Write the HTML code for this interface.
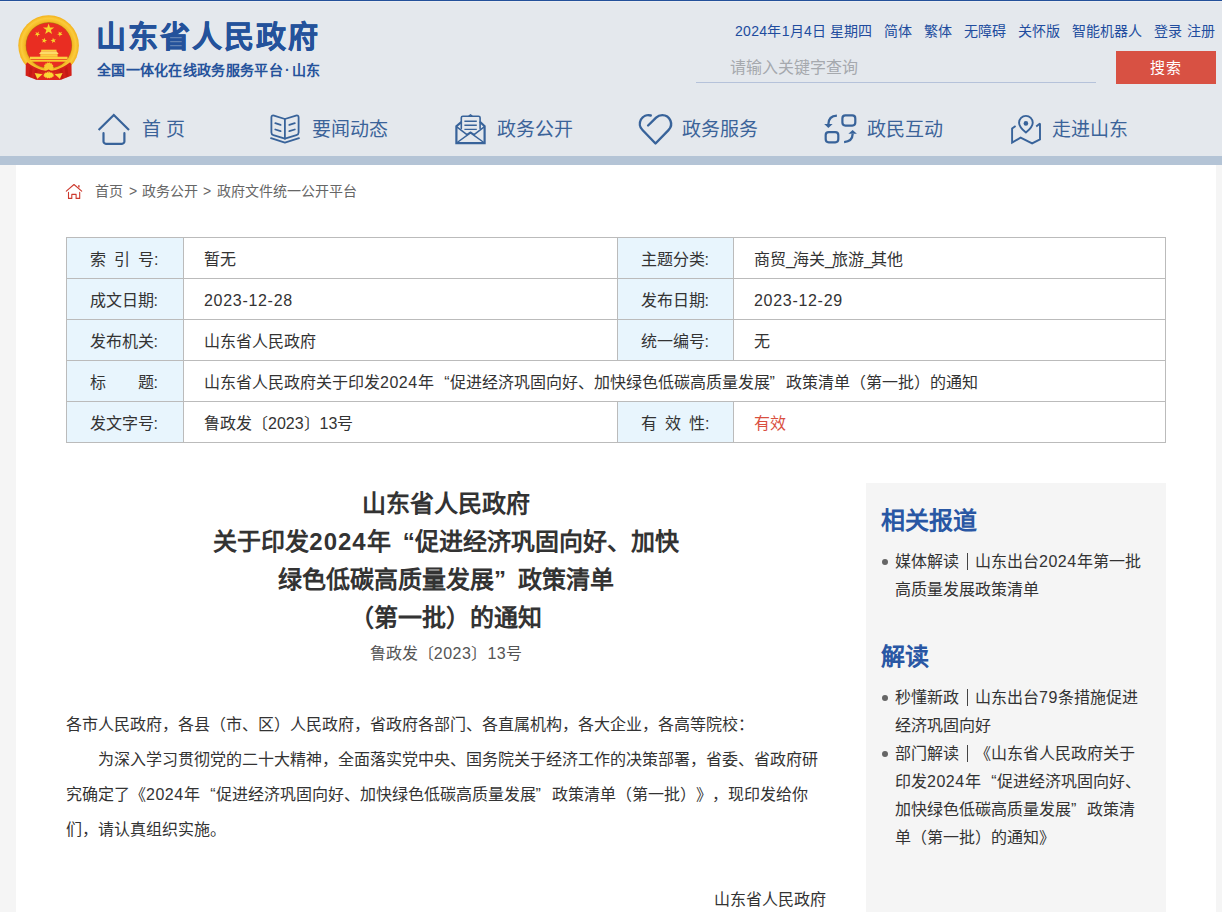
<!DOCTYPE html>
<html lang="zh-CN">
<head>
<meta charset="utf-8">
<title>山东省人民政府</title>
<style>
*{box-sizing:border-box;margin:0;padding:0}
html,body{width:1222px;height:912px;overflow:hidden}
body{text-spacing-trim:space-all;font-family:"Liberation Sans",sans-serif;background:#f5f5f5;color:#333;position:relative;font-size:16px}
a{color:inherit;text-decoration:none}
.abs{position:absolute;white-space:nowrap}
/* header */
#hd{position:absolute;left:0;top:0;width:1222px;height:156px;background:#e4e8ed}
#topline{position:absolute;left:0;top:0;width:1222px;height:1px;background:#23509a}
#topline2{position:absolute;left:0;top:1px;width:1222px;height:1px;background:#eceef2}
#band{position:absolute;left:0;top:156px;width:1222px;height:9px;background:#b4c4d6}
#logo-t{left:96px;top:15px;font-size:30px;line-height:44px;font-weight:bold;color:#24529b;letter-spacing:2px;-webkit-text-stroke:.5px #24529b}
#logo-s{left:97px;top:60px;font-size:14px;line-height:20px;font-weight:bold;color:#24529b;letter-spacing:.3px}
.tl{top:20.5px;font-size:14px;line-height:20px;color:#214c9e}
#sline{position:absolute;left:696px;top:82px;width:400px;height:1px;background:#b5c2da}
#sph{left:730px;top:57px;font-size:16px;line-height:22px;color:#a6a9ae}
#sbtn{position:absolute;left:1116px;top:51px;width:100px;height:33px;background:#d85143;color:#fff;font-size:15px;line-height:33px;text-align:center;letter-spacing:1px}
.nv{top:116px;font-size:19px;line-height:28px;color:#3b6399}
.ic{position:absolute;overflow:visible}
/* main */
#main{position:absolute;left:16px;top:165px;width:1200px;height:747px;background:#fff}
.bc{top:181px;font-size:14px;line-height:20px;color:#666}
/* table */
#tb{position:absolute;left:66px;top:237px;width:1099px;height:206px;border-collapse:collapse;table-layout:fixed;font-size:16px;color:#333}
#tb td{border:1px solid #bbb;height:41px;line-height:22px;padding:4px 0 0 20px;white-space:nowrap;vertical-align:middle}
#tb td.l{background:#e8f5fd;padding-left:22.5px;word-spacing:3.8px}
#tb .d{letter-spacing:.7px}
#tb .u{margin-right:-1.9px}
/* article */
#ttl{position:absolute;left:66px;top:484.5px;width:760px;text-align:center;font-size:24px;line-height:38.2px;font-weight:bold;color:#333;white-space:nowrap}
#sub{position:absolute;left:66px;top:642px;width:760px;text-align:center;font-size:16px;line-height:24px;color:#555;white-space:nowrap}
.p{left:66px;font-size:16px;line-height:24px;color:#333}
/* sidebar */
#sd{position:absolute;left:866px;top:483px;width:300px;height:429px;background:#f5f5f5}
.sh{left:881px;font-size:24px;line-height:34px;font-weight:bold;color:#2957a4}
.li{left:895px;font-size:16px;line-height:28px;color:#333}
.q1,.q2{display:inline-block;width:1em}.q1{text-align:right}.q2{text-align:left}
.n{letter-spacing:.5px}#ttl .n{letter-spacing:1px}
.dot{position:absolute;left:881.7px;width:6px;height:6px;border-radius:50%;background:#666}
.bar{display:inline-block;width:16px;color:transparent;background:linear-gradient(#444,#444) no-repeat 7.8px 5.3px/1.4px 17px}
</style>
</head>
<body>
<div id="hd"></div>
<div id="topline"></div><div id="topline2"></div>
<div id="band"></div>


<svg class="ic" style="left:0;top:0" width="100" height="100" viewBox="0 0 100 100">
<defs>
<radialGradient id="rg" cx="48.6" cy="45.6" r="30.3" gradientUnits="userSpaceOnUse">
<stop offset="0.74" stop-color="#e8a21a"/><stop offset="0.8" stop-color="#f6bb26"/><stop offset="0.9" stop-color="#fbcb3c"/><stop offset="1" stop-color="#f3b21c"/>
</radialGradient>
<clipPath id="cp"><rect x="0" y="0" width="100" height="66.5"/></clipPath>
</defs>
<!-- ring -->
<circle cx="48.6" cy="45.6" r="30.3" fill="url(#rg)"/>
<circle cx="48.9" cy="45.4" r="23.1" fill="#7a4a10" opacity=".55"/>
<circle cx="48.9" cy="45.4" r="22.7" fill="#e92d22"/>
<!-- drapes over ring -->
<path d="M36.8 79.9 L42.6 70.3 Q48.6 72 54.6 70.3 L60.4 79.9 Z" fill="#e0281e"/>
<path d="M27.1 62.3 Q33.5 67.4 42.8 70.6 L36.8 79.9 L25.4 75.4 L25.5 65 Z" fill="#d3211a"/>
<path d="M70.1 62.3 Q63.7 67.4 54.4 70.6 L60.4 79.9 L71.8 75.4 L71.7 65 Z" fill="#d3211a"/>
<path d="M18 62 L25.5 65 L25.4 75.4 L18 76 Z M79 62 L71.7 65 L71.8 75.4 L79 76Z" fill="#e4e8ed"/>
<path d="M30 66.5 L28.6 76.6 L31.2 77.6 L32.6 68.2 Z M35 69.3 L33.8 78.6 L36.2 79.4 L37.6 70.4Z" fill="#b8140f" opacity=".5"/>
<path d="M67.2 66.5 L68.6 76.6 L66 77.6 L64.6 68.2 Z M62.2 69.3 L63.4 78.6 L61 79.4 L59.6 70.4Z" fill="#b8140f" opacity=".5"/>
<g fill="#f9c92e">
<polygon points="53.90,67.20 52.76,68.13 53.39,69.46 51.95,69.79 51.94,71.27 50.50,70.95 49.86,72.27 48.70,71.36 47.54,72.27 46.90,70.95 45.46,71.27 45.45,69.79 44.01,69.46 44.64,68.13 43.50,67.20 44.64,66.27 44.01,64.94 45.45,64.61 45.46,63.13 46.90,63.45 47.54,62.13 48.70,63.04 49.86,62.13 50.50,63.45 51.94,63.13 51.95,64.61 53.39,64.94 52.76,66.27"/>
</g>
<path d="M41.5 70.3 C44.5 71 46.6 70.6 48.6 69.4 C50.6 70.6 52.7 71 55.7 70.3 L55.5 72.2 C52.8 72.8 50.5 72.4 48.6 71.2 C46.7 72.4 44.4 72.8 41.7 72.2Z" fill="#d3211a"/>
<!-- bottom bows -->
<g fill="#fbd734">
<path d="M34.6 73 L42.6 74.2 L37.3 78.8 Z"/><path d="M62.6 73 L54.6 74.2 L59.9 78.8 Z"/>
<polygon points="54.30,75.20 53.07,75.79 53.75,76.63 52.20,76.85 52.19,77.78 50.64,77.58 49.95,78.42 48.70,77.84 47.45,78.42 46.76,77.58 45.21,77.78 45.20,76.85 43.65,76.63 44.33,75.79 43.10,75.20 44.33,74.61 43.65,73.77 45.20,73.55 45.21,72.62 46.76,72.82 47.45,71.98 48.70,72.56 49.95,71.98 50.64,72.82 52.19,72.62 52.20,73.55 53.75,73.77 53.07,74.61"/>
</g>
<!-- tiananmen -->
<g fill="#fbd040">
<rect x="41.2" y="49.7" width="15.3" height="2"/>
<path d="M39 54.1 L41 51.6 H56.7 L58.7 54.1 Z" fill="#fcdc6a"/>
<rect x="40.3" y="54.1" width="17.3" height="2.7"/>
<rect x="29.9" y="56.7" width="37.6" height="2.3"/>
<rect x="29.9" y="59.7" width="37.6" height="2" fill="#f9c92e"/>
</g>
<!-- stars -->
<g fill="#f7d32c">
<polygon points="48.60,23.40 49.99,27.39 54.21,27.48 50.84,30.03 52.07,34.07 48.60,31.66 45.13,34.07 46.36,30.03 42.99,27.48 47.21,27.39"/>
<polygon points="38.85,31.59 38.46,33.63 40.24,34.70 38.18,34.96 37.70,36.98 36.82,35.10 34.75,35.28 36.27,33.86 35.46,31.94 37.28,32.95"/>
<polygon points="58.55,31.39 60.12,32.75 61.94,31.74 61.13,33.66 62.65,35.08 60.58,34.90 59.70,36.78 59.22,34.76 57.16,34.50 58.94,33.43"/>
<polygon points="44.70,37.74 45.03,39.79 47.07,40.20 45.22,41.14 45.47,43.21 44.00,41.74 42.11,42.61 43.05,40.76 41.64,39.24 43.69,39.56"/>
<polygon points="52.90,37.74 53.91,39.56 55.96,39.24 54.55,40.76 55.49,42.61 53.60,41.74 52.13,43.21 52.38,41.14 50.53,40.20 52.57,39.79"/>
</g>
</svg>


<div class="abs" id="logo-t">山东省人民政府</div>
<div class="abs" id="logo-s">全国一体化在线政务服务平台<span style="margin:0 2px">·</span>山东</div>

<div class="abs tl" style="left:735px;letter-spacing:.3px">2024年1月4日</div><div class="abs tl" style="left:830px">星期四</div>
<div class="abs tl" style="left:884px">简体</div>
<div class="abs tl" style="left:924px">繁体</div>
<div class="abs tl" style="left:964px">无障碍</div>
<div class="abs tl" style="left:1018px">关怀版</div>
<div class="abs tl" style="left:1072px">智能机器人</div>
<div class="abs tl" style="left:1154px">登录</div>
<div class="abs tl" style="left:1187px">注册</div>

<div id="sline"></div>
<div class="abs" id="sph">请输入关键字查询</div>
<div id="sbtn">搜索</div>

<!-- NAV -->
<div class="abs nv" style="left:142px">首 页</div>
<div class="abs nv" style="left:312px">要闻动态</div>
<div class="abs nv" style="left:497px">政务公开</div>
<div class="abs nv" style="left:682px">政务服务</div>
<div class="abs nv" style="left:867px">政民互动</div>
<div class="abs nv" style="left:1052px">走进山东</div>

<svg class="ic" style="left:0;top:0" width="1222" height="210" viewBox="0 0 1222 210" fill="none" stroke="#38639a" stroke-linecap="round" stroke-linejoin="round">
<!-- home -->
<path d="M98.6 130 L113.8 115 L129 130" stroke-width="2.2" stroke-linecap="butt" stroke-linejoin="miter"/>
<path d="M103.5 133.2 V141.4 a2.4 2.4 0 0 0 2.4 2.4 H122 a2.4 2.4 0 0 0 2.4 -2.4 V133.2" stroke-width="2.2"/>
<!-- book -->
<g stroke-width="1.8">
<path d="M284.9 119 L274 115.6 Q271.4 114.9 271.4 117.5 V132.5 Q271.4 134.5 273.4 135.2 L284.9 138.7 L296.4 135.2 Q298.6 134.5 298.6 132.5 V117.5 Q298.6 114.9 296 115.6 Z"/>
<path d="M284.9 119 V138.7"/>
<path d="M271 138.2 L284.9 142.6 L299 138.2"/>
<path d="M275.3 123.2 L280.6 124.9 M275.3 129.5 L280.6 131.2 M289.3 124.9 L294.8 123.2 M289.3 131.2 L294.8 129.5"/>
</g>
<!-- envelope -->
<path d="M461 122.3 L456.4 126.2 V143.2 H484.6 V126.2 L480.4 122.3" stroke-width="2.2" stroke-linejoin="miter"/>
<path d="M461.3 128.5 V117.8 Q461.3 116.2 462.9 116.2 H478.5 Q480.1 116.2 480.1 117.8 V128.5" stroke-width="1.6"/>
<path d="M469 116 L470.5 114.8 L472 116" stroke-width="1.4"/>
<path d="M464.4 121.3 H476.8 M464.4 125.2 H476.8 M464.4 129.4 H476.8" stroke-width="1.4" stroke-linecap="butt"/>
<path d="M456.8 126.9 L466.9 134.6 L470.5 132.2 L474.1 134.6 L484.2 126.9" stroke-width="1.5"/>
<path d="M457.8 142 L470.5 132.8 L483.2 142" stroke-width="1.5"/>
<!-- heart -->
<path d="M650.8 115.5 A8.6 8.6 0 0 0 642.5 130 L655.5 143.5 L668.5 130.1 A8.8 8.8 0 0 0 662.3 115.1 A8.8 8.8 0 0 0 656.1 117.7 L648.1 125.5" stroke-width="2.4"/>
<!-- swap -->
<rect x="842.4" y="115.4" width="12.9" height="10.2" rx="3" stroke-width="2.2"/>
<rect x="825.7" y="132.1" width="12.6" height="10.2" rx="3" stroke-width="2.2"/>
<path d="M836.9 115.6 Q828.6 116 828.4 124" stroke-width="2.3" stroke-linecap="butt"/>
<path d="M824.2 123.9 H832.6 L828.4 128 Z" fill="#38639a" stroke="none"/>
<path d="M844.1 142.1 Q852.4 141.6 852.7 133.8" stroke-width="2.3" stroke-linecap="butt"/>
<path d="M848.4 133.8 H856.9 L852.6 129.9 Z" fill="#38639a" stroke="none"/>
<!-- map pin -->
<path d="M1015.6 126.1 L1012.1 128.6 V142.6 L1020.6 137.6 L1032.1 143.4 L1040 139.3 V123.6 L1036.2 126.4" stroke-width="1.9" stroke-linejoin="miter" stroke-miterlimit="2.1" stroke-linecap="butt"/>
<path d="M1025.9 132.6 C1021 128.5 1019.05 126 1019.05 122.7 A6.85 6.85 0 1 1 1032.75 122.7 C1032.75 126 1030.8 128.5 1025.9 132.6 Z" stroke-width="1.9"/>
<circle cx="1025.9" cy="123.4" r="2.3" fill="#38639a" stroke="none"/>
</svg>


<div id="main"></div>


<svg class="ic" style="left:0;top:170px" width="120" height="40" viewBox="0 170 120 40" fill="none" stroke="#cc3a2e" stroke-width="1.1" stroke-linecap="round" stroke-linejoin="round">
<path d="M66.3 191.2 L74 184.5 L81.7 191.2"/>
<path d="M78.9 185.7 V186.9" stroke-width="1.4"/>
<path d="M68.5 192.4 V198.4 H71.8 V194.4 H76.1 V198.4 H79.7 V192.4"/>
</svg>

<div class="abs bc" style="left:95px">首页</div><div class="abs bc" style="left:129px">&gt;</div><div class="abs bc" style="left:142px">政务公开</div><div class="abs bc" style="left:203px">&gt;</div><div class="abs bc" style="left:217px">政府文件统一公开平台</div>

<table id="tb">
<colgroup><col style="width:117px"><col style="width:434px"><col style="width:116px"><col style="width:432px"></colgroup>
<tr><td class="l">索 引 号:</td><td>暂无</td><td class="l">主题分类:</td><td>商贸<span class="u">_</span>海关<span class="u">_</span>旅游<span class="u">_</span>其他</td></tr>
<tr><td class="l">成文日期:</td><td class="d">2023-12-28</td><td class="l">发布日期:</td><td class="d">2023-12-29</td></tr>
<tr><td class="l">发布机关:</td><td>山东省人民政府</td><td class="l">统一编号:</td><td>无</td></tr>
<tr><td class="l">标　　题:</td><td colspan="3">山东省人民政府关于印发<span class="n">2024</span>年<span class="q1">“</span>促进经济巩固向好、加快绿色低碳高质量发展<span class="q2">”</span>政策清单（第一批）的通知</td></tr>
<tr><td class="l">发文字号:</td><td>鲁政发〔2023〕13号</td><td class="l">有 效 性:</td><td style="color:#d9503f">有效</td></tr>
</table>

<div id="ttl">山东省人民政府<br>关于印发<span class="n">2024</span>年<span class="q1">“</span>促进经济巩固向好、加快<br>绿色低碳高质量发展<span class="q2">”</span>政策清单<br>（第一批）的通知</div>
<div id="sub">鲁政发〔<span class="n">2023</span>〕<span class="n">13</span>号</div>

<div class="abs p" style="top:713px">各市人民政府，各县（市、区）人民政府，省政府各部门、各直属机构，各大企业，各高等院校：</div>
<div class="abs p" style="top:748px;left:98px">为深入学习贯彻党的二十大精神，全面落实党中央、国务院关于经济工作的决策部署，省委、省政府研</div>
<div class="abs p" style="top:783px">究确定了《<span class="n">2024</span>年<span class="q1">“</span>促进经济巩固向好、加快绿色低碳高质量发展<span class="q2">”</span>政策清单（第一批）》，现印发给你</div>
<div class="abs p" style="top:818px">们，请认真组织实施。</div>
<div class="abs p" style="top:888px;left:auto;right:396px">山东省人民政府</div>

<div id="sd"></div>
<div class="abs sh" style="top:504px">相关报道</div>
<div class="dot" style="top:558.7px"></div>
<div class="abs li" style="top:548px">媒体解读<span class="bar">｜</span>山东出台<span class="n">2024</span>年第一批<br>高质量发展政策清单</div>
<div class="abs sh" style="top:640px">解读</div>
<div class="dot" style="top:694.7px"></div>
<div class="abs li" style="top:684px">秒懂新政<span class="bar">｜</span>山东出台<span class="n">79</span>条措施促进<br>经济巩固向好</div>
<div class="dot" style="top:750.7px"></div>
<div class="abs li" style="top:740px">部门解读<span class="bar">｜</span>《山东省人民政府关于<br>印发<span class="n">2024</span>年<span class="q1">“</span>促进经济巩固向好、<br>加快绿色低碳高质量发展<span class="q2">”</span>政策清<br>单（第一批）的通知》</div>
</body>
</html>
